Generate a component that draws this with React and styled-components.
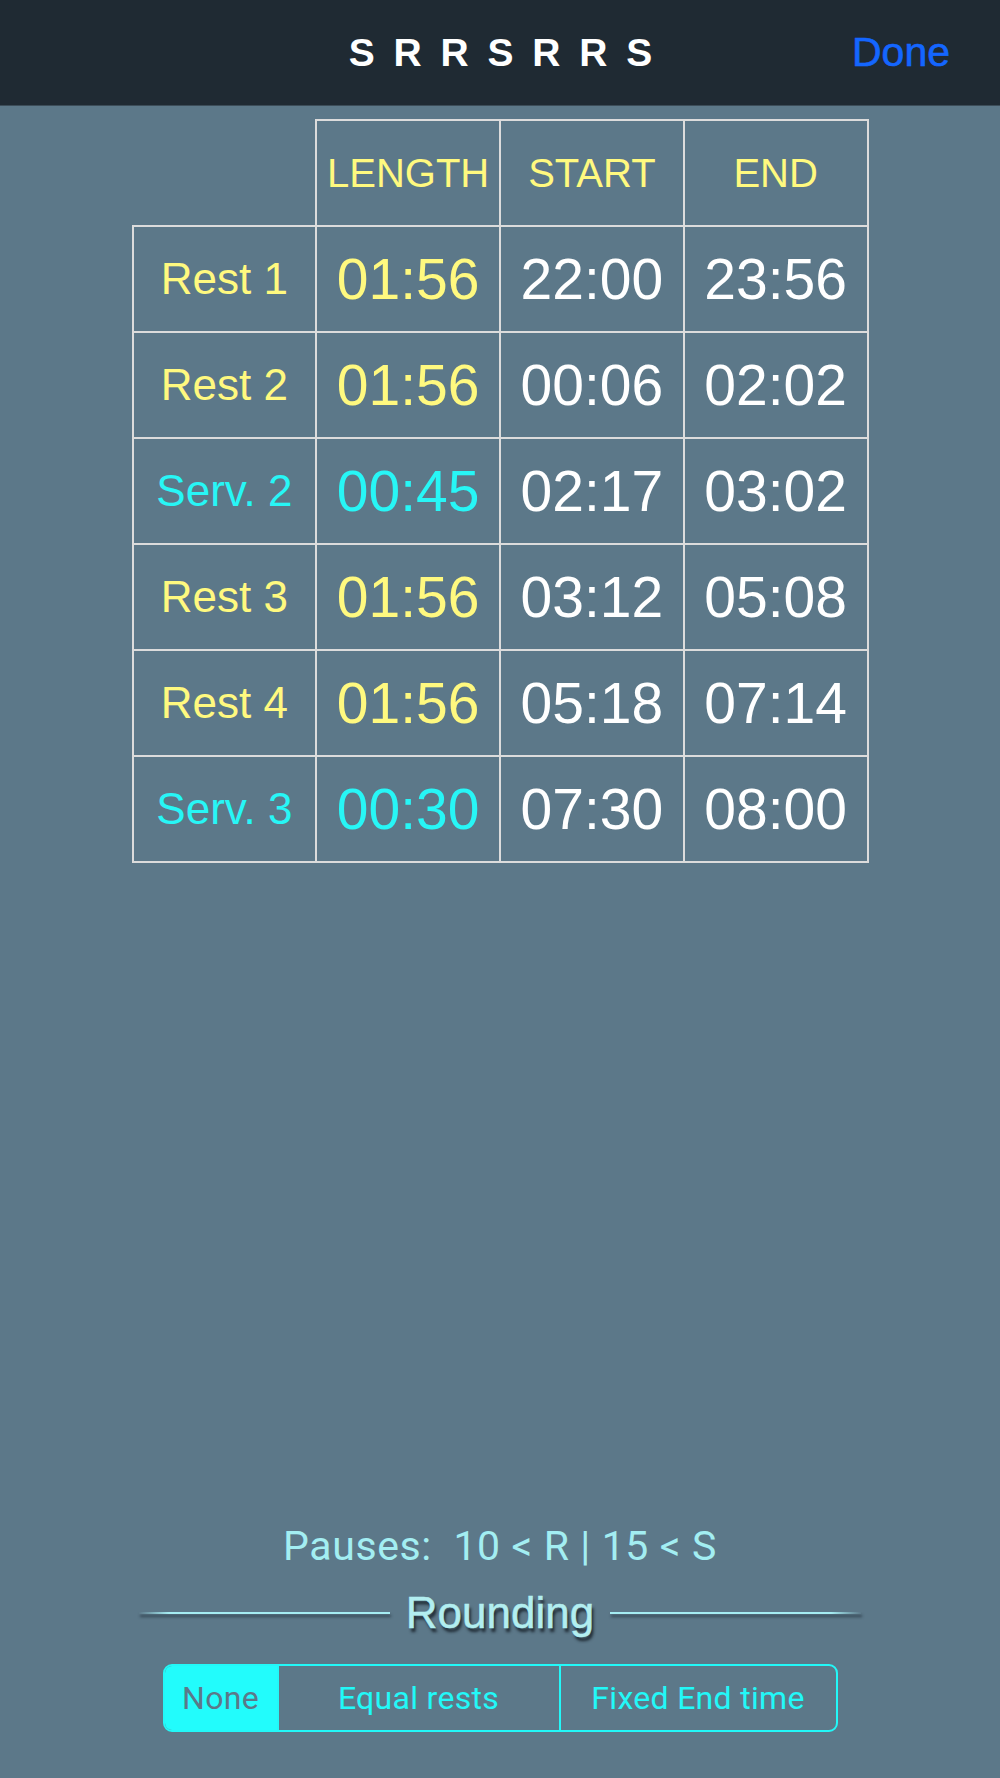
import React from "react";
import styled, { createGlobalStyle } from "styled-components";

const rows = [
  { name: "Rest 1", length: "01:56", start: "22:00", end: "23:56", kind: "rest" },
  { name: "Rest 2", length: "01:56", start: "00:06", end: "02:02", kind: "rest" },
  { name: "Serv. 2", length: "00:45", start: "02:17", end: "03:02", kind: "serv" },
  { name: "Rest 3", length: "01:56", start: "03:12", end: "05:08", kind: "rest" },
  { name: "Rest 4", length: "01:56", start: "05:18", end: "07:14", kind: "rest" },
  { name: "Serv. 3", length: "00:30", start: "07:30", end: "08:00", kind: "serv" },
];

const segments = ["None", "Equal rests", "Fixed End time"];

const GlobalStyle = createGlobalStyle`
  html, body {
    margin: 0;
    padding: 0;
    background: #5c7889;
  }
`;

const Page = styled.div`
  height: 1778px;
  display: flex;
  flex-direction: column;
  background: #5c7889;
  font-family: "Liberation Sans", Arial, sans-serif;
`;

const NavBar = styled.header`
  height: 106px;
  flex-shrink: 0;
  background: #1f2a33;
  display: grid;
  grid-template-columns: 1fr auto 1fr;
  align-items: center;
  padding: 0 50px;
  box-sizing: border-box;
  border-bottom: 1px solid #3c4d59;
`;

const Title = styled.h1`
  grid-column: 2;
  margin: 0 0 0 4px;
  color: #ffffff;
  font-size: 39px;
  font-weight: 700;
  letter-spacing: 3px;
  word-spacing: 2px;
`;

const DoneButton = styled.button`
  grid-column: 3;
  justify-self: end;
  background: none;
  border: none;
  padding: 0;
  color: #1466ff;
  font-family: "Liberation Sans", Arial, sans-serif;
  font-size: 41px;
  -webkit-text-stroke: 0.6px #1466ff;
`;

const Grid = styled.table`
  margin: 13px auto 0;
  border-collapse: collapse;
  table-layout: fixed;
  width: 737px;
`;

const Cell = styled.td`
  border: 2px solid #dcdcdc;
  height: 104px;
  padding: 0;
  text-align: center;
  vertical-align: middle;
  font-size: ${(p) => (p.$big ? "57px" : "44px")};
  color: ${(p) => p.$color};
`;

const HeadCell = styled.th`
  border: ${(p) => (p.$blank ? "none" : "2px solid #dcdcdc")};
  height: 104px;
  padding: 0;
  text-align: center;
  vertical-align: middle;
  font-size: 40px;
  font-weight: 400;
  color: #fff97f;
`;

const Spacer = styled.div`
  flex: 1;
`;

const Footer = styled.section`
  display: flex;
  flex-direction: column;
  align-items: center;
  padding-bottom: 46px;
  font-family: Roboto, "Liberation Sans", sans-serif;
`;

const Pauses = styled.div`
  color: #a3eef2;
  font-size: 41px;
  letter-spacing: 0.6px;
  white-space: pre;
`;

const SectionTitle = styled.div`
  display: flex;
  align-items: center;
  gap: 16px;
  width: 722px;
  margin-top: 18px;
`;

const Rule = styled.div`
  flex: 1;
  height: 2px;
  background: linear-gradient(
    ${(p) => (p.$left ? "to right" : "to left")},
    rgba(165, 236, 242, 0) 0,
    #a5ecf2 30px
  );
  box-shadow: 1px 3px 3px rgba(20, 30, 40, 0.6);
`;

const RuleLabel = styled.div`
  font-family: "Liberation Sans", Arial, sans-serif;
  font-size: 44px;
  color: #b2eef0;
  -webkit-text-stroke: 0.5px #b2eef0;
  text-shadow: 2px 4px 3px rgba(20, 28, 36, 0.85);
`;

const Segmented = styled.div`
  display: flex;
  margin-top: 26px;
  height: 68px;
  border: 2px solid #22f8f8;
  border-radius: 9px;
  overflow: hidden;
  box-sizing: border-box;
`;

const Segment = styled.div`
  display: flex;
  align-items: center;
  justify-content: center;
  width: ${(p) => p.$width}px;
  font-size: 32px;
  letter-spacing: 0.3px;
  background: ${(p) => (p.$active ? "#22fcfc" : "transparent")};
  color: ${(p) => (p.$active ? "#5c7889" : "#22f8f8")};
  & + & {
    border-left: 2px solid #22f8f8;
  }
`;

const colorFor = (kind) => (kind === "serv" ? "#27f6f6" : "#fff97f");

export default function App() {
  const widths = [112, 280, 275];
  return (
    <Page>
      <GlobalStyle />
      <NavBar>
        <Title>S R R S R R S</Title>
        <DoneButton>Done</DoneButton>
      </NavBar>

      <Grid>
        <thead>
          <tr>
            <HeadCell $blank />
            <HeadCell>LENGTH</HeadCell>
            <HeadCell>START</HeadCell>
            <HeadCell>END</HeadCell>
          </tr>
        </thead>
        <tbody>
          {rows.map((r) => (
            <tr key={r.name}>
              <Cell $color={colorFor(r.kind)}>{r.name}</Cell>
              <Cell $big $color={colorFor(r.kind)}>{r.length}</Cell>
              <Cell $big $color="#ffffff">{r.start}</Cell>
              <Cell $big $color="#ffffff">{r.end}</Cell>
            </tr>
          ))}
        </tbody>
      </Grid>

      <Spacer />

      <Footer>
        <Pauses>{"Pauses:  10 < R | 15 < S"}</Pauses>
        <SectionTitle>
          <Rule $left />
          <RuleLabel>Rounding</RuleLabel>
          <Rule />
        </SectionTitle>
        <Segmented>
          {segments.map((s, i) => (
            <Segment key={s} $width={widths[i]} $active={i === 0}>
              {s}
            </Segment>
          ))}
        </Segmented>
      </Footer>
    </Page>
  );
}
